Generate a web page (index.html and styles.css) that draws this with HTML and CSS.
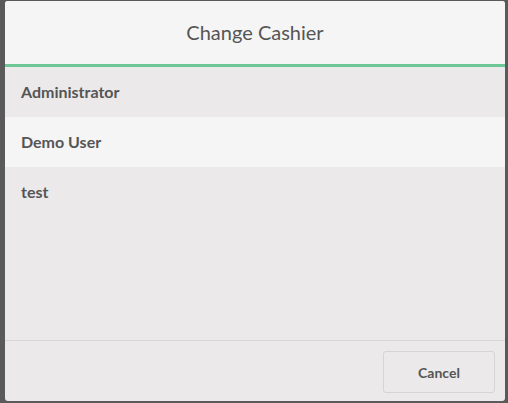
FILE: index.html
```html
<!DOCTYPE html>
<html>
<head>
<meta charset="utf-8">
<link rel="stylesheet" href="styles.css">
</head>
<body>
<div class="backdrop">
  <div class="modal">
    <div class="modal-header">Change Cashier</div>
    <div class="modal-body">
      <div class="row">Administrator</div>
      <div class="row alt">Demo User</div>
      <div class="row">test</div>
    </div>
    <div class="modal-footer">
      <button class="btn">Cancel</button>
    </div>
  </div>
</div>
</body>
</html>
```
FILE: styles.css
```css
html, body {
  margin: 0;
  padding: 0;
  height: 100%;
}
body {
  background: #5a5a5a;
  font-family: Lato, "Open Sans", sans-serif;
  overflow: hidden;
}
.backdrop {
  height: 100%;
  box-sizing: border-box;
  padding: 1px 3px 2px 5px;
  display: flex;
}
.modal {
  flex: 1;
  display: flex;
  flex-direction: column;
  background: #ebe9ea;
  border-radius: 3px;
  overflow: hidden;
}
.modal-header {
  flex: none;
  background: #f5f5f5;
  border-bottom: 3px solid #6ec796;
  display: flex;
  align-items: center;
  justify-content: center;
  font-size: 20px;
  color: #555555;
  padding-bottom: 1px;
  box-sizing: border-box;
  height: 66px;
}
.modal-body {
  flex: 1;
  display: flex;
  flex-direction: column;
}
.row {
  height: 50px;
  flex: none;
  box-sizing: border-box;
  padding-left: 16px;
  display: flex;
  align-items: center;
  font-size: 16px;
  font-weight: bold;
  color: #555555;
  background: #ebe9ea;
  padding-bottom: 1px;
}
.row.alt {
  background: #f5f5f5;
}
.modal-footer {
  height: 61px;
  flex: none;
  border-top: 1px solid #d7d5d6;
  box-sizing: border-box;
  display: flex;
  justify-content: flex-end;
  align-items: flex-start;
  padding: 10px 10px 0 0;
}
.btn {
  width: 112px;
  height: 42px;
  border: 1px solid #d6d4d5;
  border-radius: 3px;
  background: #ebe9ea;
  font-family: Lato, "Open Sans", sans-serif;
  font-weight: bold;
  font-size: 14px;
  color: #555555;
  padding: 0;
}
```
